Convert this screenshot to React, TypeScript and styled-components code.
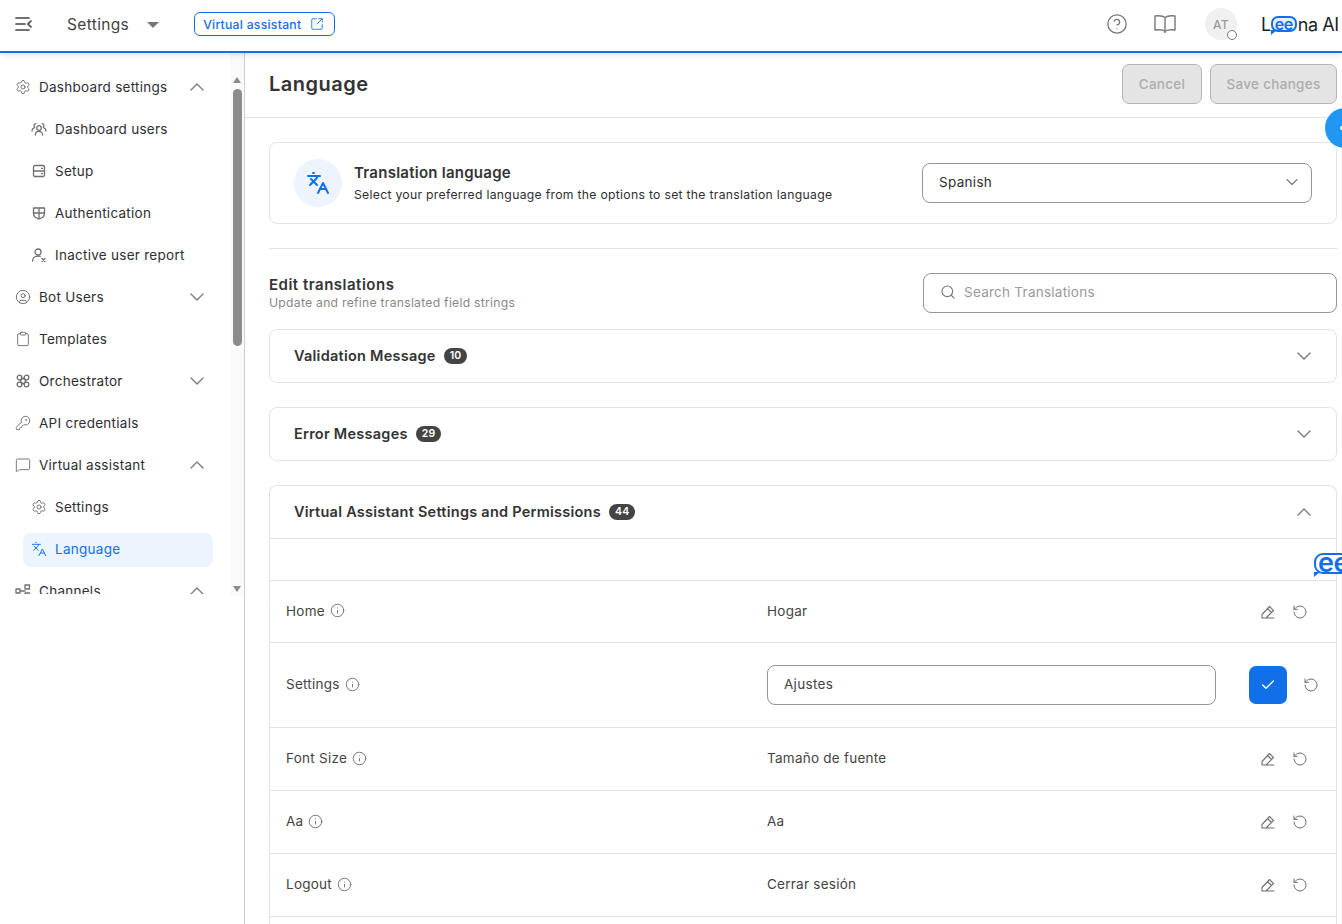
import React from "react";
import styled, { createGlobalStyle } from "styled-components";
import {
  Check,
  ChevronDown,
  ChevronUp,
  CircleHelp,
  CircleUser,
  Clipboard,
  Info,
  KeyRound,
  Languages,
  MessageSquare,
  RotateCcw,
  Search,
  Settings,
  SquareArrowOutUpRight,
} from "lucide-react";

const BLUE = "#1170e8";
const TEXT = "#2e2e33";
const LINE = "#e3e3e3";
const FONT = `Inter, "Noto Sans", "Liberation Sans", sans-serif`;

const GlobalStyle = createGlobalStyle`
  html, body {
    margin: 0;
    height: 100%;
    overflow: hidden;
    background: #fff;
    font-family: ${FONT};
    color: ${TEXT};
  }
  * {
    box-sizing: border-box;
  }
`;

const Page = styled.div`
  display: flex;
  flex-direction: column;
  width: 1342px;
  height: 924px;
  overflow: hidden;
`;

/* top bar */

const Header = styled.header`
  display: flex;
  align-items: center;
  flex: 0 0 53px;
  padding: 0 4px 3px 15px;
  background: #fff;
  border-bottom: 2px solid ${BLUE};
  box-shadow: 0 2px 6px rgba(0, 0, 0, 0.12);
  position: relative;
  z-index: 3;
`;

const AppTitle = styled.span`
  margin-left: 34px;
  font-size: 15.5px;
  letter-spacing: 0.35px;
  color: #444;
`;

const Caret = styled.span`
  width: 0;
  height: 0;
  margin: 1px 0 0 18px;
  border-left: 6px solid transparent;
  border-right: 6px solid transparent;
  border-top: 6px solid #777;
`;

const AssistantLink = styled.a`
  display: flex;
  align-items: center;
  gap: 9px;
  height: 24px;
  margin-left: 35px;
  padding: 0 10px 0 8px;
  border: 1px solid ${BLUE};
  border-radius: 6px;
  font-size: 12.2px;
  letter-spacing: 0.27px;
  font-weight: 500;
  color: ${BLUE};
`;

const HeaderRight = styled.div`
  display: flex;
  align-items: center;
  margin-left: auto;
`;

const IconSlot = styled.span<{ $gap: number }>`
  display: flex;
  margin-right: ${(p) => p.$gap}px;
  color: #777;
`;

const Avatar = styled.div`
  position: relative;
  display: flex;
  align-items: center;
  justify-content: center;
  width: 32px;
  height: 32px;
  margin-right: 24px;
  border-radius: 50%;
  background: #f0f0f0;
  font-size: 12px;
  font-weight: 500;
  letter-spacing: 0.4px;
  color: #999;

  &::after {
    content: "";
    position: absolute;
    right: 0;
    bottom: 0;
    width: 8px;
    height: 8px;
    border-radius: 50%;
    background: #fff;
    border: 1px solid #777;
  }
`;

const Logo = styled.div`
  display: flex;
  align-items: center;
  width: 77px;
  font-size: 18px;
  font-weight: 400;
  letter-spacing: -0.4px;
  color: #1d1d1f;
  white-space: nowrap;
`;

const Bubble = styled.span<{ $large?: boolean }>`
  position: relative;
  display: inline-flex;
  align-items: center;
  justify-content: center;
  height: ${(p) => (p.$large ? "21px" : "16px")};
  padding: 0 2px ${(p) => (p.$large ? "3px" : "1px")};
  margin: ${(p) => (p.$large ? "0" : "0 1px 0 0")};
  border: 2px solid ${BLUE};
  border-radius: ${(p) => (p.$large ? "9px" : "7px")};
  background: ${(p) => (p.$large ? "#fff" : "#e6f0fd")};
  font-size: ${(p) => (p.$large ? "27px" : "16px")};
  line-height: 1;
  font-weight: 600;
  letter-spacing: -0.5px;
  color: ${BLUE};

  &::after {
    content: "";
    position: absolute;
    left: -2px;
    bottom: -5px;
    border-top: 5px solid ${BLUE};
    border-right: 6px solid transparent;
  }
`;

/* sidebar */

const Body = styled.div`
  display: flex;
  flex: 1;
  min-height: 0;
`;

const Sidebar = styled.aside`
  display: flex;
  align-items: flex-start;
  flex: 0 0 245px;
  border-right: 1px solid #cfcfcf;
`;

const NavList = styled.nav`
  flex: 0 0 230px;
  height: 541px;
  padding: 13px 0 0;
  overflow: hidden;
`;

const NavItem = styled.a<{ $sub?: boolean; $active?: boolean }>`
  display: flex;
  align-items: center;
  height: ${(p) => (p.$active ? "34px" : "42px")};
  margin: ${(p) => (p.$active ? "5px 17px 3px 23px" : "0")};
  padding: 0 21px ${(p) => (p.$active ? "2px" : "0")} ${(p) => (p.$active ? "8px" : p.$sub ? "31px" : "15px")};
  border-radius: 8px;
  background: ${(p) => (p.$active ? "#ecf4fe" : "transparent")};
  font-size: 13.5px;
  letter-spacing: 0.27px;
  color: ${(p) => (p.$active ? BLUE : TEXT)};

  svg.lead {
    color: ${(p) => (p.$active ? BLUE : "#6f6f6f")};
    margin-right: 8px;
    flex: none;
  }
  svg.chev {
    margin-left: auto;
    color: #777;
    flex: none;
  }
`;

const Scrollbar = styled.div`
  display: flex;
  flex-direction: column;
  align-items: center;
  flex: 0 0 14px;
  height: 543px;
  padding: 24px 0 4px;
  background: #fafafa;
`;

const Arrow = styled.span<{ $down?: boolean }>`
  flex: none;
  border-left: 4.5px solid transparent;
  border-right: 4.5px solid transparent;
  border-${(p) => (p.$down ? "top" : "bottom")}: 6px solid #8a8a8a;
`;

const Thumb = styled.div`
  flex: none;
  width: 9px;
  height: 257px;
  margin: 6px 0 auto;
  border-radius: 5px;
  background: #8c8c8c;
`;

/* main column */

const Main = styled.main`
  position: relative;
  flex: 1;
  min-width: 0;
  overflow: hidden;
`;

const TitleBar = styled.div`
  display: flex;
  align-items: center;
  gap: 8px;
  height: 65px;
  padding: 0 5px 2px 24px;
  border-bottom: 1px solid ${LINE};
`;

const PageTitle = styled.h1`
  margin: 0 auto 0 0;
  font-size: 20px;
  font-weight: 600;
  letter-spacing: 0.5px;
  color: #333;
`;

const DisabledButton = styled.button<{ $w: number }>`
  width: ${(p) => p.$w}px;
  height: 40px;
  border: 1px solid #b5b5b5;
  border-radius: 7px;
  background: #e4e4e4;
  font-family: ${FONT};
  font-size: 13.5px;
  font-weight: 500;
  letter-spacing: 0.3px;
  color: #acacac;
`;

const Content = styled.div`
  padding: 24px 5px 0 24px;
`;

const Card = styled.section`
  display: flex;
  align-items: center;
  height: 82px;
  padding: 0 24px;
  border: 1px solid ${LINE};
  border-radius: 8px;
`;

const IconCircle = styled.span`
  display: flex;
  align-items: center;
  justify-content: center;
  flex: none;
  width: 48px;
  height: 48px;
  margin-right: 12px;
  border-radius: 50%;
  background: #edf4fe;
  color: ${BLUE};
`;

const CardText = styled.div`
  flex: 1;
`;

const CardTitle = styled.div`
  font-size: 15px;
  font-weight: 600;
  letter-spacing: 0.25px;
  line-height: 20px;
  color: #333;
`;

const CardSub = styled.div`
  margin-top: 3px;
  font-size: 12.2px;
  letter-spacing: 0.3px;
  line-height: 18px;
`;

const Field = styled.div<{ $w: number }>`
  display: flex;
  align-items: center;
  flex: none;
  width: ${(p) => p.$w}px;
  height: 40px;
  padding: 0 16px 2px;
  border: 1px solid #969696;
  border-radius: 8px;
  background: #fff;
  font-size: 13.5px;
  letter-spacing: 0.3px;
`;

const SelectChevron = styled(ChevronDown)`
  margin-left: auto;
  margin-right: -7px;
  color: #777;
`;

const Divider = styled.hr`
  height: 1px;
  margin: 24px 0;
  border: 0;
  background: ${LINE};
`;

const EditHead = styled.div`
  display: flex;
  align-items: center;
  justify-content: space-between;
  margin-bottom: 16px;
`;

const EditTitle = styled.h2`
  margin: 0;
  font-size: 15px;
  font-weight: 600;
  letter-spacing: 0.5px;
  line-height: 19px;
  color: #333;
`;

const EditSub = styled.div`
  margin-top: 0;
  font-size: 12.2px;
  letter-spacing: 0.26px;
  line-height: 17px;
  color: #888;
`;

const SearchField = styled(Field)`
  gap: 8px;
  letter-spacing: 0.25px;
  color: #999;
`;

const Accordion = styled.section<{ $open?: boolean }>`
  margin-bottom: 24px;
  border: 1px solid ${LINE};
  border-radius: 8px;
  ${(p) => p.$open && "border-bottom: 0; border-radius: 8px 8px 0 0; margin-bottom: 0;"}
`;

const AccordionHead = styled.div`
  display: flex;
  align-items: center;
  gap: 8px;
  height: 52px;
  padding: 0 20px 1px 24px;
  font-size: 14.5px;
  font-weight: 600;
  letter-spacing: 0.25px;
  color: #333;

  svg {
    margin-left: auto;
    color: #777;
  }
`;

const Count = styled.span`
  display: flex;
  align-items: center;
  height: 16px;
  padding: 0 6px;
  border-radius: 8px;
  background: #444;
  font-size: 10.5px;
  letter-spacing: 0.2px;
  color: #fff;
`;

const SpacerRow = styled.div`
  height: 43px;
  border-top: 1px solid ${LINE};
  border-bottom: 1px solid ${LINE};
`;

const Row = styled.div<{ $h: number }>`
  display: grid;
  grid-template-columns: 481px 1fr auto;
  align-items: center;
  height: ${(p) => p.$h}px;
  padding-left: 16px;
  border-bottom: 1px solid ${LINE};
  font-size: 13.5px;
  letter-spacing: 0.25px;
  color: #444;
`;

const Rows = styled.div`
  border-left: 1px solid ${LINE};
  border-right: 1px solid ${LINE};
`;

const Label = styled.div`
  display: flex;
  align-items: center;
  gap: 5px;
  padding-bottom: 2px;

  svg {
    color: #6f6f6f;
  }
`;

const Value = styled.div`
  padding-bottom: 2px;
`;

const Actions = styled.div<{ $edit?: boolean }>`
  display: flex;
  align-items: center;
  gap: 16px;
  padding-left: ${(p) => (p.$edit ? "33px" : "0")};
  padding-right: ${(p) => (p.$edit ? "18px" : "28px")};
  color: #6f6f6f;
`;

const ConfirmButton = styled.button`
  display: flex;
  align-items: center;
  justify-content: center;
  width: 38px;
  height: 38px;
  padding: 0;
  border: 0;
  border-radius: 7px;
  background: ${BLUE};
  color: #fff;
`;

const Fab = styled.div`
  position: absolute;
  top: 55px;
  left: 1080px;
  width: 40px;
  height: 40px;
  border-radius: 50%;
  background: #2196f3;
  z-index: 2;

  &::after {
    content: "";
    position: absolute;
    left: 15px;
    top: 18px;
    width: 4px;
    height: 4px;
    border-radius: 50%;
    background: #fff;
  }
`;

const FloatingMark = styled.div`
  position: absolute;
  top: 500px;
  left: 1069px;
  z-index: 2;
`;

/* small drawn icons the packages don't have in this shape */

const Svg = ({ size = 16, className, children }: { size?: number; className?: string; children: React.ReactNode }) => (
  <svg
    className={className}
    width={size}
    height={size}
    viewBox="0 0 16 16"
    fill="none"
    stroke="currentColor"
    strokeWidth="1.3"
    strokeLinecap="round"
    strokeLinejoin="round"
  >
    {children}
  </svg>
);

const MenuIcon = () => (
  <svg width="18" height="16" viewBox="0 0 18 16" fill="none" stroke="#444" strokeWidth="1.7" strokeLinecap="round">
    <path d="M1 2h13M1 8h9M1 14h13M16 5l-3 3 3 3" />
  </svg>
);

const BookIcon = () => (
  <svg width="24" height="22" viewBox="0 0 24 22" fill="none" stroke="currentColor" strokeWidth="1.4" strokeLinejoin="round">
    <path d="M12 4.5C10 2.8 6 2.6 2 3v14c4-.4 8-.2 10 1.3 2-1.5 6-1.7 10-1.3V3c-4-.4-8-.2-10 1.5zM12 4.5v15.5" />
  </svg>
);

const TeamIcon = ({ className }: { className?: string }) => (
  <Svg className={className}>
    <circle cx="8" cy="7" r="2.3" />
    <path d="M4.3 14c0-2.2 1.7-3.6 3.7-3.6s3.7 1.4 3.7 3.6" />
    <path d="M5 2.6a2 2 0 0 0-1.3 3.5M1 10c0-1.5.8-2.6 2-3.1M11 2.6a2 2 0 0 1 1.3 3.5M15 10c0-1.5-.8-2.6-2-3.1" />
  </Svg>
);

const SetupIcon = ({ className }: { className?: string }) => (
  <Svg className={className}>
    <rect x="2.5" y="2.5" width="11" height="11" rx="1.5" />
    <path d="M2.5 8h11M10.5 5.3h1M10.5 10.7h1" />
  </Svg>
);

const ShieldIcon = ({ className }: { className?: string }) => (
  <Svg className={className}>
    <path d="M2.5 3h11v5.5c0 2.8-2.6 4.6-5.5 5.5-2.9-.9-5.5-2.7-5.5-5.5zM8 3v11M2.5 8h11" />
  </Svg>
);

const UserXIcon = ({ className }: { className?: string }) => (
  <Svg className={className}>
    <circle cx="7" cy="5" r="3" />
    <path d="M1.5 14c0-3 2.4-5 5.5-5 .8 0 1.5.1 2.2.4M11 11.5l3 3M14 11.5l-3 3" />
  </Svg>
);

const OrchestratorIcon = ({ className }: { className?: string }) => (
  <Svg className={className}>
    <circle cx="4.5" cy="4.5" r="2.3" />
    <circle cx="11.5" cy="4.5" r="2.3" />
    <circle cx="4.5" cy="11.5" r="2.3" />
    <circle cx="11.5" cy="11.5" r="2.3" />
    <path d="M5 8l3-3 3 3-3 3z" />
  </Svg>
);

const ChannelsIcon = ({ className }: { className?: string }) => (
  <Svg className={className}>
    <rect x="1" y="6" width="4" height="4" />
    <rect x="10" y="2" width="4.5" height="4" />
    <rect x="10" y="10" width="4.5" height="4" />
    <path d="M5 8h5" />
  </Svg>
);

const EditIcon = () => (
  <svg width="16" height="16" viewBox="0 0 16 16" fill="none" stroke="currentColor" strokeWidth="1.1" strokeLinejoin="round" strokeLinecap="round">
    <path d="M2 14v-3.5L9.5 2.5 13.5 6.5 6 14zM7.5 4.5l4 4M6 14h8" />
  </svg>
);

type NavEntry = {
  label: string;
  Icon: React.ComponentType<any>;
  sub?: boolean;
  active?: boolean;
  chevron?: "up" | "down";
};

const navEntries: NavEntry[] = [
  { label: "Dashboard settings", Icon: Settings, chevron: "up" },
  { label: "Dashboard users", Icon: TeamIcon, sub: true },
  { label: "Setup", Icon: SetupIcon, sub: true },
  { label: "Authentication", Icon: ShieldIcon, sub: true },
  { label: "Inactive user report", Icon: UserXIcon, sub: true },
  { label: "Bot Users", Icon: CircleUser, chevron: "down" },
  { label: "Templates", Icon: Clipboard },
  { label: "Orchestrator", Icon: OrchestratorIcon, chevron: "down" },
  { label: "API credentials", Icon: KeyRound },
  { label: "Virtual assistant", Icon: MessageSquare, chevron: "up" },
  { label: "Settings", Icon: Settings, sub: true },
  { label: "Language", Icon: Languages, sub: true, active: true },
  { label: "Channels", Icon: ChannelsIcon, chevron: "up" },
];

const translations = [
  { label: "Home", value: "Hogar", height: 62 },
  { label: "Settings", value: "Ajustes", height: 85, editing: true },
  { label: "Font Size", value: "Tamaño de fuente", height: 63 },
  { label: "Aa", value: "Aa", height: 63 },
  { label: "Logout", value: "Cerrar sesión", height: 63 },
  { label: "", value: "", height: 63 },
];

const App = () => {
  return (
    <Page>
      <GlobalStyle />
      <Header>
        <MenuIcon />
        <AppTitle>Settings</AppTitle>
        <Caret />
        <AssistantLink>
          Virtual assistant
          <SquareArrowOutUpRight size={14} strokeWidth={1.5} />
        </AssistantLink>
        <HeaderRight>
          <IconSlot $gap={25}>
            <CircleHelp size={22} strokeWidth={1.4} />
          </IconSlot>
          <IconSlot $gap={28}>
            <BookIcon />
          </IconSlot>
          <Avatar>AT</Avatar>
          <Logo>
            L<Bubble>ee</Bubble>na AI
          </Logo>
        </HeaderRight>
      </Header>

      <Body>
        <Sidebar>
          <NavList>
            {navEntries.map(({ label, Icon, sub, active, chevron }) => (
              <NavItem key={label + (sub ? "-sub" : "")} $sub={sub} $active={active}>
                <Icon className="lead" size={16} strokeWidth={1.4} />
                {label}
                {chevron === "up" && <ChevronUp className="chev" size={24} strokeWidth={1.3} />}
                {chevron === "down" && <ChevronDown className="chev" size={24} strokeWidth={1.3} />}
              </NavItem>
            ))}
          </NavList>
          <Scrollbar>
            <Arrow />
            <Thumb />
            <Arrow $down />
          </Scrollbar>
        </Sidebar>

        <Main>
          <TitleBar>
            <PageTitle>Language</PageTitle>
            <DisabledButton $w={80}>Cancel</DisabledButton>
            <DisabledButton $w={127}>Save changes</DisabledButton>
          </TitleBar>

          <Content>
            <Card>
              <IconCircle>
                <Languages size={24} strokeWidth={2} />
              </IconCircle>
              <CardText>
                <CardTitle>Translation language</CardTitle>
                <CardSub>Select your preferred language from the options to set the translation language</CardSub>
              </CardText>
              <Field $w={390}>
                Spanish
                <SelectChevron size={20} strokeWidth={1.3} />
              </Field>
            </Card>

            <Divider />

            <EditHead>
              <div>
                <EditTitle>Edit translations</EditTitle>
                <EditSub>Update and refine translated field strings</EditSub>
              </div>
              <SearchField $w={414}>
                <Search size={16} strokeWidth={1.7} color="#777" />
                Search Translations
              </SearchField>
            </EditHead>

            <Accordion>
              <AccordionHead>
                Validation Message <Count>10</Count>
                <ChevronDown size={24} strokeWidth={1.3} />
              </AccordionHead>
            </Accordion>
            <Accordion>
              <AccordionHead>
                Error Messages <Count>29</Count>
                <ChevronDown size={24} strokeWidth={1.3} />
              </AccordionHead>
            </Accordion>
            <Accordion $open>
              <AccordionHead>
                Virtual Assistant Settings and Permissions <Count>44</Count>
                <ChevronUp size={24} strokeWidth={1.3} />
              </AccordionHead>
            </Accordion>

            <Rows>
              <SpacerRow />
              {translations.map((t) => (
                <Row key={t.label || "next"} $h={t.height}>
                  <Label>
                    {t.label}
                    {t.label && <Info size={15} strokeWidth={1.5} />}
                  </Label>
                  {t.editing ? <Field $w={449}>{t.value}</Field> : <Value>{t.value}</Value>}
                  {t.label &&
                    (t.editing ? (
                      <Actions $edit>
                        <ConfirmButton>
                          <Check size={16} strokeWidth={2} />
                        </ConfirmButton>
                        <RotateCcw size={16} strokeWidth={1.5} />
                      </Actions>
                    ) : (
                      <Actions>
                        <EditIcon />
                        <RotateCcw size={16} strokeWidth={1.5} />
                      </Actions>
                    ))}
                </Row>
              ))}
            </Rows>
          </Content>

          <Fab />
          <FloatingMark>
            <Bubble $large>ee</Bubble>
          </FloatingMark>
        </Main>
      </Body>
    </Page>
  );
};

export default App;
